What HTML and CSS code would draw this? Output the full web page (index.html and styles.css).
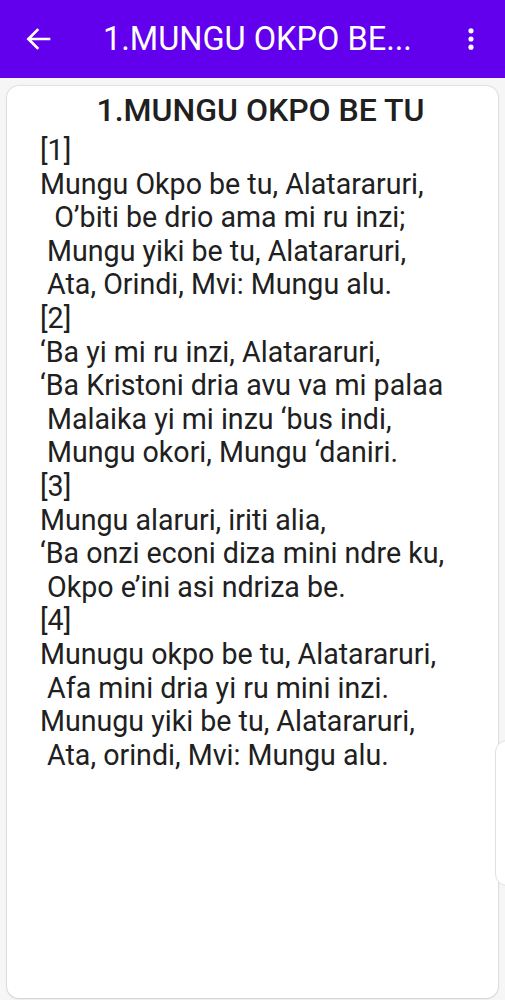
FILE: index.html
```html
<!DOCTYPE html>
<html>
<head>
<meta charset="utf-8">
<link rel="stylesheet" href="styles.css">
</head>
<body>
<header class="appbar">
  <svg class="back" viewBox="0 0 24 24"><path d="M20 12H4.5M11.5 5l-7 7 7 7" fill="none" stroke="#fff" stroke-width="1.9"/></svg>
  <div class="bar-title">1.MUNGU OKPO BE...</div>
  <svg class="more" viewBox="0 0 24 24" width="28" height="28"><circle cx="12" cy="5" r="2.2" fill="#fff"/><circle cx="12" cy="12" r="2.2" fill="#fff"/><circle cx="12" cy="19" r="2.2" fill="#fff"/></svg>
</header>
<main class="card">
  <h1 class="title">1.MUNGU OKPO BE TU</h1>
  <div class="lyrics">[1]
Mungu Okpo be tu, Alatararuri,
  O’biti be drio ama mi ru inzi;
 Mungu yiki be tu, Alatararuri,
 Ata, Orindi, Mvi: Mungu alu.
[2]
‘Ba yi mi ru inzi, Alatararuri,
‘Ba Kristoni dria avu va mi palaa
 Malaika yi mi inzu ‘bus indi,
 Mungu okori, Mungu ‘daniri.
[3]
Mungu alaruri, iriti alia,
‘Ba onzi econi diza mini ndre ku,
 Okpo e’ini asi ndriza be.
[4]
Munugu okpo be tu, Alatararuri,
 Afa mini dria yi ru mini inzi.
Munugu yiki be tu, Alatararuri,
 Ata, orindi, Mvi: Mungu alu.</div>
</main>
<div class="handle"></div>
</body>
</html>
```
FILE: styles.css
```css
html, body {
  margin: 0;
  padding: 0;
}
body {
  width: 505px;
  height: 1000px;
  background: #f6f6f6;
  font-family: Roboto, "Noto Sans", sans-serif;
  overflow: hidden;
  position: relative;
}
.appbar {
  height: 78px;
  background: #6200ee;
  display: flex;
  align-items: center;
  color: #fff;
  padding: 0 20px 0 22px;
  box-sizing: border-box;
}
.back {
  flex: none;
  width: 34px;
  height: 34px;
}
.bar-title {
  flex: 1;
  font-size: 32.5px;
  margin-left: 47px;
  white-space: nowrap;
}
.more {
  flex: none;
}
.card {
  margin: 8px 7px 0 7px;
  height: 912px;
  background: #fff;
  border-radius: 12px;
  box-shadow: 0 0 1px 1px rgba(0,0,0,0.09), 0 1px 2px rgba(0,0,0,0.08);
  box-sizing: border-box;
  padding: 4px 0 0 33px;
}
.title {
  margin: 0 0 0 -33px;
  text-align: center;
  font-size: 32px;
  font-weight: 500;
  color: #202020;
  line-height: 40px;
  padding-left: 16px;
}
.lyrics {
  white-space: pre;
  font-size: 28.6px;
  line-height: 33.6px;
  color: #202020;
  margin-top: 4px;
}
.handle {
  position: absolute;
  right: -6px;
  top: 740px;
  width: 14px;
  height: 144px;
  background: #fff;
  border: 1px solid #e0e0e0;
  border-radius: 12px 0 0 12px;
}
```
